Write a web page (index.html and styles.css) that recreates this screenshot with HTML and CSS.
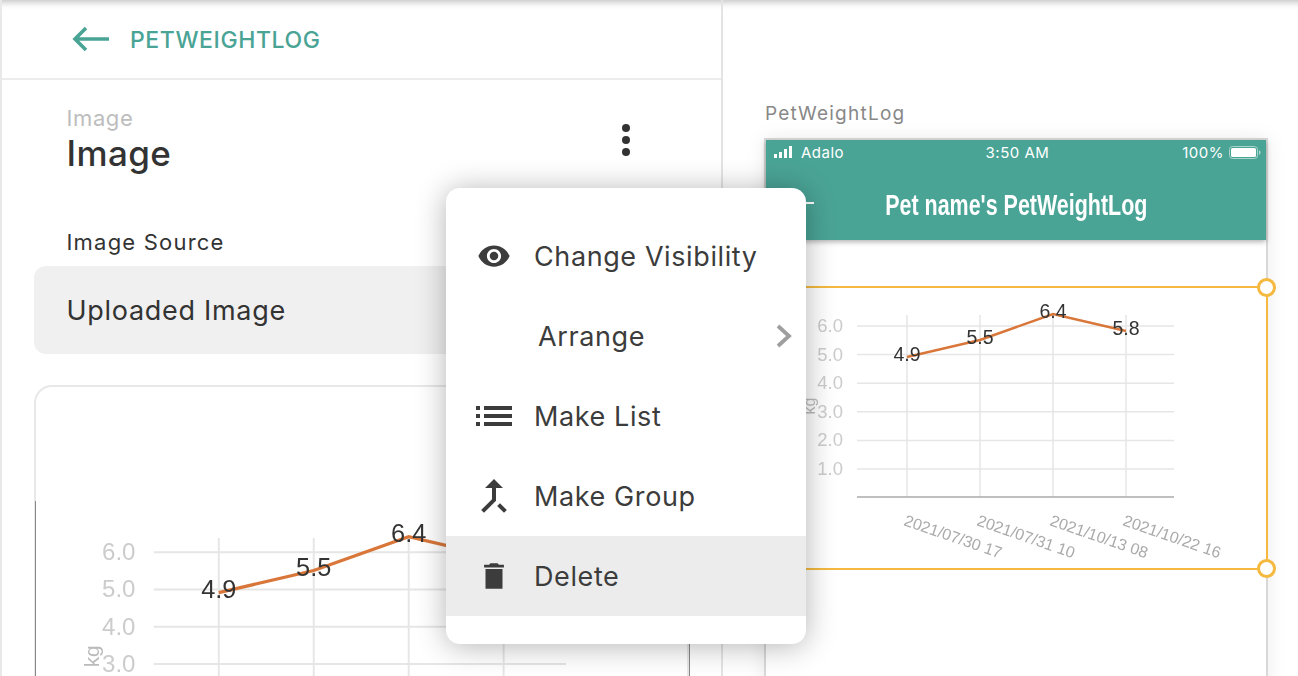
FILE: index.html
```html
<!DOCTYPE html>
<html lang="en">

<head>
	<meta charset="UTF-8">
	<meta name="viewport" content="width=device-width, initial-scale=1.0">
	<title>PetWeightLog</title>
	<link rel="stylesheet" href="styles.css">
</head>

<body>
	<main class="page">
		<section class="panel">
			<header class="panel-header">
				<svg class="back-icon" viewBox="0 0 38 26" width="38" height="26">
					<path d="M37 13H4M14 2L3 13l11 11" fill="none" stroke="#4aa496" stroke-width="3.6" />
				</svg>
				<span class="panel-title">PETWEIGHTLOG</span>
			</header>

			<div class="panel-body">
				<div class="component-head">
					<div>
						<div class="component-type">Image</div>
						<h1 class="component-name">Image</h1>
					</div>
					<div class="more-dots"><i></i><i></i><i></i></div>
				</div>

				<div class="field-label">Image Source</div>
				<div class="field-value">Uploaded Image</div>

				<div class="image-card">
					<svg class="chart chart-large" viewBox="1.5 0 502 282">
						<g class="grid">
							<path d="M92 39H409M92 67.6H409M92 96.2H409M92 124.8H409M92 153.4H409M92 182H409" />
							<path d="M142 28V210M215 28V210M288 28V210M361 28V210" />
						</g>
						<path class="axis" d="M92 210H409" />
						<g class="y-labels">
							<text x="78" y="45">6.0</text>
							<text x="78" y="73.600">5.0</text>
							<text x="78" y="102.200">4.0</text>
							<text x="78" y="130.800">3.0</text>
							<text x="78" y="159.400">2.0</text>
							<text x="78" y="188">1.0</text>
						</g>
						<text class="unit" transform="translate(50 119) rotate(-90)">kg</text>
						<polyline class="line" points="142,70 215,53 288,27 361,44" />
						<g class="values">
							<text x="142" y="74">4.9</text>
							<text x="215" y="57">5.5</text>
							<text x="288" y="31">6.4</text>
							<text x="361" y="48">5.8</text>
						</g>
						<g class="dates">
							<text transform="translate(138 238) rotate(19)">2021/07/30 17</text>
							<text transform="translate(211 238) rotate(19)">2021/07/31 10</text>
							<text transform="translate(284 238) rotate(19)">2021/10/13 08</text>
							<text transform="translate(357 238) rotate(19)">2021/10/22 16</text>
						</g>
					</svg>
				</div>
			</div>
		</section>

		<section class="canvas">
			<div class="screen-name">PetWeightLog</div>
			<div class="phone">
				<div class="app-bar">
					<div class="status-bar">
						<div class="status-left">
							<svg viewBox="0 0 19 12" width="19" height="12">
								<path d="M0 8h3v4H0zM5 6h3v6H5zM10 3h3v9h-3zM15 0h3v12h-3z" fill="#fff" />
							</svg>
							<span>Adalo</span>
						</div>
						<span class="status-time">3:50 AM</span>
						<div class="status-right">
							<span>100%</span>
							<svg viewBox="0 0 32 13" width="32" height="13">
								<rect x="0.500" y="0.500" width="28" height="12" rx="3" fill="none" stroke="#a9d5cd" />
								<rect x="2" y="2" width="25" height="9" rx="1.500" fill="#fff" />
								<path d="M30 4.500c1 0 1.500.5 1.500 2s-.5 2-1.500 2z" fill="#a9d5cd" />
							</svg>
						</div>
					</div>
					<div class="app-title-row">
						<svg class="app-back" viewBox="0 0 24 16" width="24" height="16">
							<path d="M24 8H2M8 2L2 8l6 6" fill="none" stroke="#fff" stroke-width="2" />
						</svg>
						<span class="app-title">Pet name's PetWeightLog</span>
					</div>
				</div>

				<div class="selection">
					<svg class="chart" viewBox="0 0 502 282">
						<g class="grid">
							<path d="M92 39H409M92 67.6H409M92 96.2H409M92 124.8H409M92 153.4H409M92 182H409" />
							<path d="M142 28V210M215 28V210M288 28V210M361 28V210" />
						</g>
						<path class="axis" d="M92 210H409" />
						<g class="y-labels">
							<text x="78" y="45">6.0</text>
							<text x="78" y="73.600">5.0</text>
							<text x="78" y="102.200">4.0</text>
							<text x="78" y="130.800">3.0</text>
							<text x="78" y="159.400">2.0</text>
							<text x="78" y="188">1.0</text>
						</g>
						<text class="unit" transform="translate(50 119) rotate(-90)">kg</text>
						<polyline class="line" points="142,70 215,53 288,27 361,44" />
						<g class="values">
							<text x="142" y="74">4.9</text>
							<text x="215" y="57">5.5</text>
							<text x="288" y="31">6.4</text>
							<text x="361" y="48">5.8</text>
						</g>
						<g class="dates">
							<text transform="translate(138 238) rotate(19)">2021/07/30 17</text>
							<text transform="translate(211 238) rotate(19)">2021/07/31 10</text>
							<text transform="translate(284 238) rotate(19)">2021/10/13 08</text>
							<text transform="translate(357 238) rotate(19)">2021/10/22 16</text>
						</g>
					</svg>
					<span class="handle handle-top"></span>
					<span class="handle handle-bottom"></span>
				</div>
			</div>
		</section>

		<!-- context menu, sits over the panel and the phone -->
		<ul class="menu">
			<li class="menu-item">
				<span class="menu-icon">
					<svg viewBox="0 0 24 24" width="34" height="34">
						<path d="M12 4.500C7 4.500 2.730 7.610 1 12c1.730 4.390 6 7.500 11 7.500s9.270-3.110 11-7.500c-1.730-4.390-6-7.500-11-7.500zM12 17c-2.760 0-5-2.240-5-5s2.240-5 5-5 5 2.240 5 5-2.240 5-5 5zm0-8c-1.660 0-3 1.340-3 3s1.340 3 3 3 3-1.340 3-3-1.340-3-3-3z" />
					</svg>
				</span>
				Change Visibility
			</li>
			<li class="menu-item menu-item-plain">
				<span class="menu-icon"></span>
				Arrange
				<svg class="chevron" viewBox="0 0 16 24" width="16" height="24">
					<path d="M2 2l11 10L2 22" fill="none" stroke="#9e9e9e" stroke-width="3.800" />
				</svg>
			</li>
			<li class="menu-item">
				<span class="menu-icon">
					<svg viewBox="0 0 36 20" width="36" height="20">
						<path d="M0 0h4v4H0zM0 8h4v4H0zM0 16h4v4H0zM8 0h28v4H8zM8 8h28v4H8zM8 16h28v4H8z" />
					</svg>
				</span>
				Make List
			</li>
			<li class="menu-item">
				<span class="menu-icon">
					<svg viewBox="0 0 24 24" width="48" height="48">
						<path d="M17 20.410L18.410 19 15 15.590 13.590 17 17 20.410zM7.500 8H11v5.590L5.590 19 7 20.410l6-6V8h3.500L12 3.500 7.500 8z" />
					</svg>
				</span>
				Make Group
			</li>
			<li class="menu-item menu-item-active">
				<span class="menu-icon">
					<svg viewBox="0 0 24 24" width="34" height="34">
						<path d="M6 21h12V7H6zM19 4h-3.500l-1-1h-5l-1 1H5v2h14V4z" />
					</svg>
				</span>
				Delete
			</li>
		</ul>
	</main>
</body>

</html>
```

FILE: styles.css
```css
* {
	margin: 0;
	padding: 0;
	box-sizing: border-box;
}

html,
body {
	height: 100%;
	overflow: hidden;
}

body {
	background: #fff;
	color: #333;
	font-family: Inter, "Noto Sans", sans-serif;
}

.page {
	position: relative;
	display: flex;
	height: 676px;
	overflow: hidden;
	box-shadow: inset 0 8px 7px -6px rgba(0, 0, 0, 0.26);
}

/* left panel */
.panel {
	width: 723px;
	flex-shrink: 0;
	border-left: 2px solid #e9e9e9;
	border-right: 2px solid #e4e4e4;
}

.panel-header {
	display: flex;
	align-items: center;
	height: 80px;
	padding: 2px 0 0 70px;
	border-bottom: 2px solid #ececec;
}

.back-icon {
	margin: -2px 20px 0 0;
}

.panel-title {
	color: #4aa496;
	font-size: 23px;
	font-weight: 500;
	letter-spacing: 0.6px;
}

.panel-body {
	padding: 0 32px;
}

.component-head {
	display: flex;
	justify-content: space-between;
	padding: 25px 0 0 32.500px;
	height: 150px;
}

.component-type {
	color: #bdbdbd;
	font-size: 22px;
	letter-spacing: 0.6px;
	line-height: 26px;
}

.component-name {
	font-size: 35px;
	font-weight: 500;
	letter-spacing: 0.4px;
	line-height: 44px;
}

.more-dots {
	display: flex;
	flex-direction: column;
	gap: 4px;
	margin: 19px 59px 0 0;
}

.more-dots i {
	width: 8px;
	height: 8px;
	border-radius: 50%;
	background: #333;
}

.field-label {
	padding: 1px 0 0 32.500px;
	font-size: 22px;
	letter-spacing: 1.200px;
	line-height: 23px;
}

.field-value {
	display: flex;
	align-items: center;
	height: 88px;
	margin-top: 12px;
	padding-left: 32.500px;
	border-radius: 12px;
	background: #f0f0f0;
	font-size: 27px;
	letter-spacing: 0.700px;
}

.image-card {
	height: 400px;
	margin-top: 31px;
	padding-top: 114px;
	border: 2px solid #e8e8e8;
	border-radius: 18px;
}

/* chart image, used in the panel and on the phone */
.chart {
	display: block;
	width: 502px;
	height: 282px;
	font-family: "Liberation Sans", Arial, sans-serif;
	filter: blur(0.3px);
}

.chart-large {
	width: 655px;
	height: 368px;
	margin-left: -1px;
	border-left: 1px solid #888;
	border-right: 1px solid #888;
}

.grid path {
	fill: none;
	stroke: #e6e6e6;
	stroke-width: 1.5;
}

.axis {
	fill: none;
	stroke: #aaa;
	stroke-width: 1.5;
}

.y-labels text {
	fill: #ccc;
	font-size: 18.500px;
	text-anchor: end;
}

.unit {
	fill: #bbb;
	font-size: 16px;
	text-anchor: middle;
}

.line {
	fill: none;
	stroke: #d9773a;
	stroke-width: 2.500;
}

.values text {
	fill: #333;
	font-size: 19.500px;
	text-anchor: middle;
}

.dates text {
	fill: #aaa;
	font-size: 16px;
}

/* right canvas */
.canvas {
	flex: 1;
	padding: 102px 0 0 41px;
}

.screen-name {
	padding-left: 1px;
	color: #888;
	font-size: 19px;
	letter-spacing: 1.250px;
	line-height: 24px;
	margin-bottom: 12px;
}

.phone {
	width: 504px;
	height: 560px;
	border: 2px solid #d8d8d8;
	border-bottom: 0;
	box-shadow: 0 0 18px rgba(0, 0, 0, 0.08);
}

.app-bar {
	height: 100px;
	background: #4aa496;
	color: #fff;
	box-shadow: 0 2px 5px rgba(0, 0, 0, 0.3);
}

.status-bar {
	display: flex;
	align-items: center;
	justify-content: space-between;
	height: 24px;
	padding: 0 5px 0 8px;
	font-size: 15px;
	letter-spacing: 0.500px;
}

.status-left,
.status-right {
	display: flex;
	align-items: center;
	gap: 8px;
	width: 160px;
}

.status-right {
	gap: 5px;
	justify-content: flex-end;
}

.app-title-row {
	position: relative;
	display: flex;
	justify-content: center;
	align-items: center;
	height: 76px;
	padding-top: 6px;
}

.app-back {
	position: absolute;
	left: 24px;
	top: 31px;
}

/* no condensed family here, so the bold sans is squeezed to the title's width */
.app-title {
	display: inline-block;
	font-family: "Liberation Sans", sans-serif;
	font-size: 30px;
	font-weight: 700;
	white-space: nowrap;
	transform: scaleX(0.715);
}

.selection {
	position: relative;
	width: 504px;
	height: 284px;
	margin: 46px 0 0 -2px;
	border: 2px solid #f5b93f;
}

.selection .chart {
	margin: -1px 0 0 -1px;
}

.handle {
	position: absolute;
	right: -10px;
	width: 19px;
	height: 19px;
	border: 3px solid #f5b93f;
	border-radius: 50%;
	background: #fff;
}

.handle-top {
	top: -10px;
}

.handle-bottom {
	bottom: -10px;
}

/* context menu */
.menu {
	position: absolute;
	left: 446px;
	top: 188px;
	width: 360px;
	padding: 28px 0;
	border-radius: 14px;
	background: #fff;
	box-shadow: 0 2px 30px rgba(0, 0, 0, 0.3);
	list-style: none;
}

.menu-item {
	display: flex;
	align-items: center;
	height: 80px;
	padding-left: 24px;
	color: #3c3c3c;
	font-size: 27px;
	letter-spacing: 0.600px;
}

.menu-item-plain {
	position: relative;
	padding-left: 28px;
}

.menu-item-active {
	background: #ececec;
}

.menu-icon {
	display: flex;
	align-items: center;
	justify-content: center;
	width: 48px;
	margin-right: 16px;
}

.menu-icon svg path {
	fill: #3c3c3c;
}

.chevron {
	position: absolute;
	right: 14px;
	top: 28px;
}
```
